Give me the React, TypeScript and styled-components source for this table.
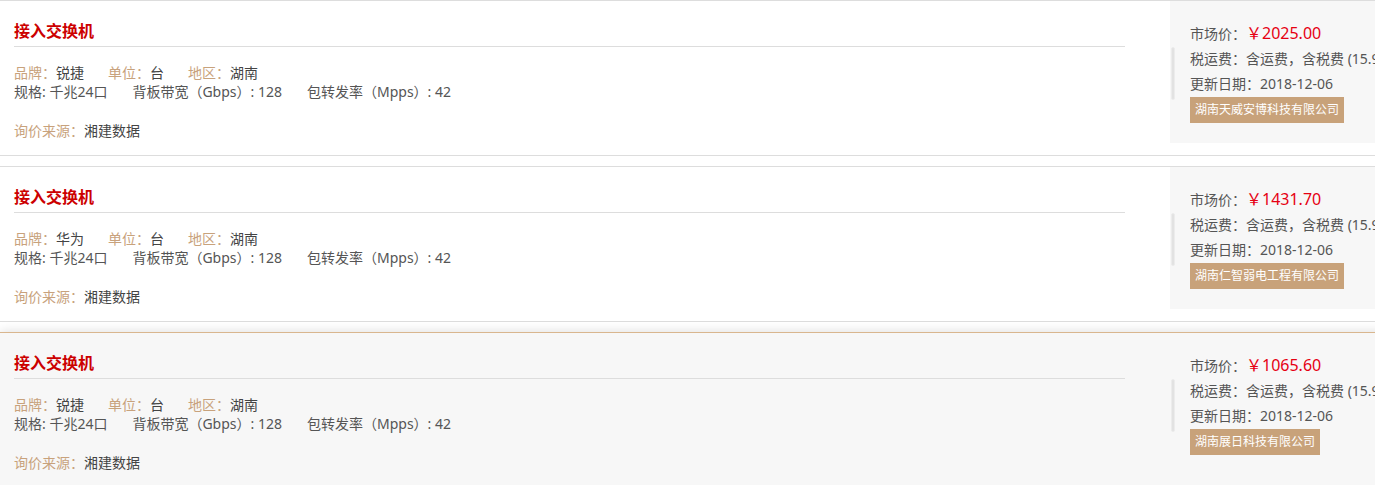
import React from "react";
import styled, { createGlobalStyle } from "styled-components";

const Global = createGlobalStyle`
  html, body { margin: 0; padding: 0; background: #fff; overflow: hidden; }
  body { font-family: "Noto Sans", "Noto Sans CJK SC", sans-serif; color: #555; }
`;

const List = styled.div`
  width: 1500px;
  display: flex;
  flex-direction: column;
  gap: 10px;
`;

const Card = styled.div<{ $active?: boolean }>`
  display: flex;
  border-top: 1px solid ${(p) => (p.$active ? "#d9b68e" : "#dddddd")};
  border-bottom: 1px solid ${(p) => (p.$active ? "#f7f7f7" : "#dddddd")};
  background: ${(p) => (p.$active ? "#f7f7f7" : "#ffffff")};
  box-shadow: ${(p) => (p.$active ? "0 -1px 10px rgba(0,0,0,0.12)" : "none")};
`;

const Main = styled.div`
  flex: 0 0 auto;
  width: 1111px;
  padding: 15px 0 15px 14px;
  display: flex;
  flex-direction: column;
`;

const Title = styled.div`
  height: 30px;
  line-height: 30px;
  font-size: 16px;
  font-weight: 700;
  color: #cc0000;
  border-bottom: 1px solid #dddddd;
`;

const Rows = styled.div`
  margin-top: 16px;
  display: flex;
  flex-direction: column;
`;

const Row = styled.div<{ $gap?: number }>`
  display: flex;
  gap: ${(p) => p.$gap ?? 24}px;
  font-size: 14px;
  line-height: 19px;
  color: #555;
  white-space: nowrap;
`;

const Source = styled(Row)`
  margin-top: 20px;
`;

const Label = styled.span`
  color: #c8a27c;
`;

const Value = styled.span`
  color: #444;
`;

const Side = styled.div`
  position: relative;
  flex: 0 0 auto;
  margin-left: 45px;
  width: 280px;
  height: 102px;
  padding: 20px 0 20px 20px;
  background: #f7f7f7;
  font-size: 14px;
  line-height: 25px;
  color: #555;
  white-space: nowrap;
  &::before {
    content: "";
    position: absolute;
    left: 1px;
    top: 46px;
    width: 2px;
    height: 51px;
    border-radius: 2px;
    background: #e2e2e2;
    border: 1px solid #ececec;
  }
`;

const Price = styled.span`
  color: #e60012;
  font-size: 16px;
`;

const Tag = styled.div`
  display: inline-block;
  margin-top: 1px;
  padding: 0 5px;
  height: 26px;
  line-height: 26px;
  background: #c8a27a;
  color: #fff;
  font-size: 12px;
`;

type Item = {
  brand: string;
  price: string;
  company: string;
  active?: boolean;
};

const items: Item[] = [
  { brand: "锐捷", price: "2025.00", company: "湖南天威安博科技有限公司" },
  { brand: "华为", price: "1431.70", company: "湖南仁智弱电工程有限公司" },
  { brand: "锐捷", price: "1065.60", company: "湖南展日科技有限公司", active: true },
];

export default function App() {
  return (
    <>
      <Global />
      <List>
        {items.map((it, i) => (
          <Card key={i} $active={it.active}>
            <Main>
              <Title>接入交换机</Title>
              <Rows>
                <Row>
                  <span>
                    <Label>品牌：</Label>
                    <Value>{it.brand}</Value>
                  </span>
                  <span>
                    <Label>单位：</Label>
                    <Value>台</Value>
                  </span>
                  <span>
                    <Label>地区：</Label>
                    <Value>湖南</Value>
                  </span>
                </Row>
                <Row $gap={25}>
                  <span>规格: 千兆24口</span>
                  <span>背板带宽（Gbps）: 128</span>
                  <span>包转发率（Mpps）: 42</span>
                </Row>
              </Rows>
              <Source>
                <span>
                  <Label>询价来源：</Label>
                  <Value>湘建数据</Value>
                </span>
              </Source>
            </Main>
            <Side>
              <div>
                市场价：<Price>￥{it.price}</Price>
              </div>
              <div>税运费：含运费，含税费 (15.9%)</div>
              <div>更新日期：2018-12-06</div>
              <Tag>{it.company}</Tag>
            </Side>
          </Card>
        ))}
      </List>
    </>
  );
}
